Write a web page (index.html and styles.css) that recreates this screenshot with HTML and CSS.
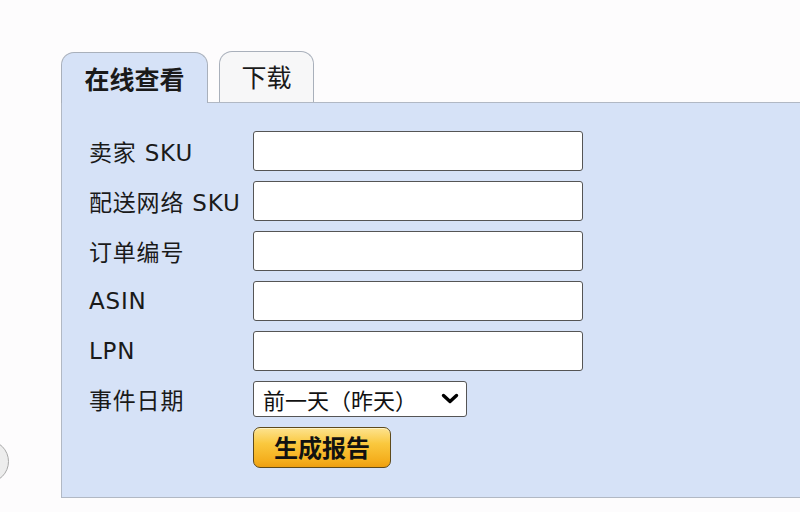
FILE: index.html
```html
<!DOCTYPE html>
<html lang="zh-CN">

<head>
    <meta charset="UTF-8">
    <meta name="viewport" content="width=device-width, initial-scale=1.0">
    <title>库存事件报告</title>
    <link rel="stylesheet" href="styles.css">
</head>

<body>
    <div class="side-handle"></div>

    <div class="tabs">
        <div class="tab active">在线查看</div>
        <div class="tab">下载</div>
    </div>

    <div class="panel">
        <form class="report-form">
            <label for="sku">卖家 SKU</label>
            <input id="sku" type="text">

            <label for="fnsku">配送网络 SKU</label>
            <input id="fnsku" type="text">

            <label for="order">订单编号</label>
            <input id="order" type="text">

            <label for="asin">ASIN</label>
            <input id="asin" type="text">

            <label for="lpn">LPN</label>
            <input id="lpn" type="text">

            <label for="date">事件日期</label>
            <div class="select-wrap">
                <select id="date">
                    <option>前一天（昨天）</option>
                    <option>过去 7 天</option>
                    <option>过去 30 天</option>
                </select>
                <svg class="chevron" width="18" height="11" viewBox="0 0 18 11">
                    <path d="M2.5 2.5 L9 8.5 L15.5 2.5" fill="none" stroke="#000" stroke-width="3.4" stroke-linecap="round" stroke-linejoin="round"/>
                </svg>
            </div>

            <span></span>
            <button type="button" class="btn-generate">生成报告</button>
        </form>
    </div>
</body>

</html>
```

FILE: styles.css
```css
body {
    margin: 0;
    background: #fdfcfd;
    font-family: "DejaVu Sans", "Noto Sans CJK SC", sans-serif;
    color: #1a1a1a;
    overflow: hidden;
}

.side-handle {
    position: absolute;
    left: -34px;
    top: 440px;
    width: 41px;
    height: 41px;
    border: 1px solid #a8a8a8;
    border-radius: 50%;
    background: #ededed;
}

.tabs {
    display: flex;
    align-items: flex-end;
    gap: 11px;
    margin: 51px 0 0 61px;
}

.tab {
    box-sizing: border-box;
    display: flex;
    align-items: center;
    justify-content: center;
    width: 95px;
    height: 51px;
    border: 1px solid #a9b0bb;
    border-bottom: none;
    border-radius: 13px 13px 0 0;
    background: #f7f7f8;
    font-family: "Noto Sans CJK SC", sans-serif;
    font-size: 25px;
    padding-bottom: 2px;
}

.tab.active {
    position: relative;
    z-index: 1;
    width: 147px;
    height: 51px;
    margin-bottom: -1px;
    background: #d6e2f7;
    font-weight: bold;
    padding-bottom: 0;
}

.panel {
    margin-left: 61px;
    padding: 28px 0 29px 27px;
    background: #d6e2f7;
    border: 1px solid #b1b8c4;
    border-right: none;
}

.report-form {
    display: grid;
    grid-template-columns: 164px 330px;
    row-gap: 10px;
    align-items: center;
}

.report-form label {
    font-size: 23px;
    letter-spacing: 0.8px;
    white-space: nowrap;
}

.report-form input {
    box-sizing: border-box;
    width: 330px;
    height: 40px;
    border: 1px solid #555;
    border-radius: 3px;
    background: #fff;
}

.select-wrap {
    position: relative;
    width: 214px;
}

.select-wrap select {
    box-sizing: border-box;
    width: 214px;
    height: 36px;
    padding: 0 0 0 9px;
    border: 1px solid #555;
    border-radius: 3px;
    background: #fff;
    font-family: "Noto Sans CJK SC", sans-serif;
    font-size: 22px;
    color: #111;
    appearance: none;
    -webkit-appearance: none;
}

.chevron {
    position: absolute;
    right: 8px;
    top: 12px;
    pointer-events: none;
}

.btn-generate {
    box-sizing: border-box;
    width: 138px;
    height: 41px;
    border: 1px solid #5e4a1c;
    border-radius: 7px;
    background: linear-gradient(#fde38f 0%, #fac83e 40%, #f4ad1c 85%, #ee9f10 100%);
    box-shadow: inset 0 1px 0 #fff3c4;
    font-family: "Noto Sans CJK SC", sans-serif;
    font-size: 24px;
    font-weight: bold;
    color: #111;
    padding: 0 0 2px;
    cursor: pointer;
}
```
